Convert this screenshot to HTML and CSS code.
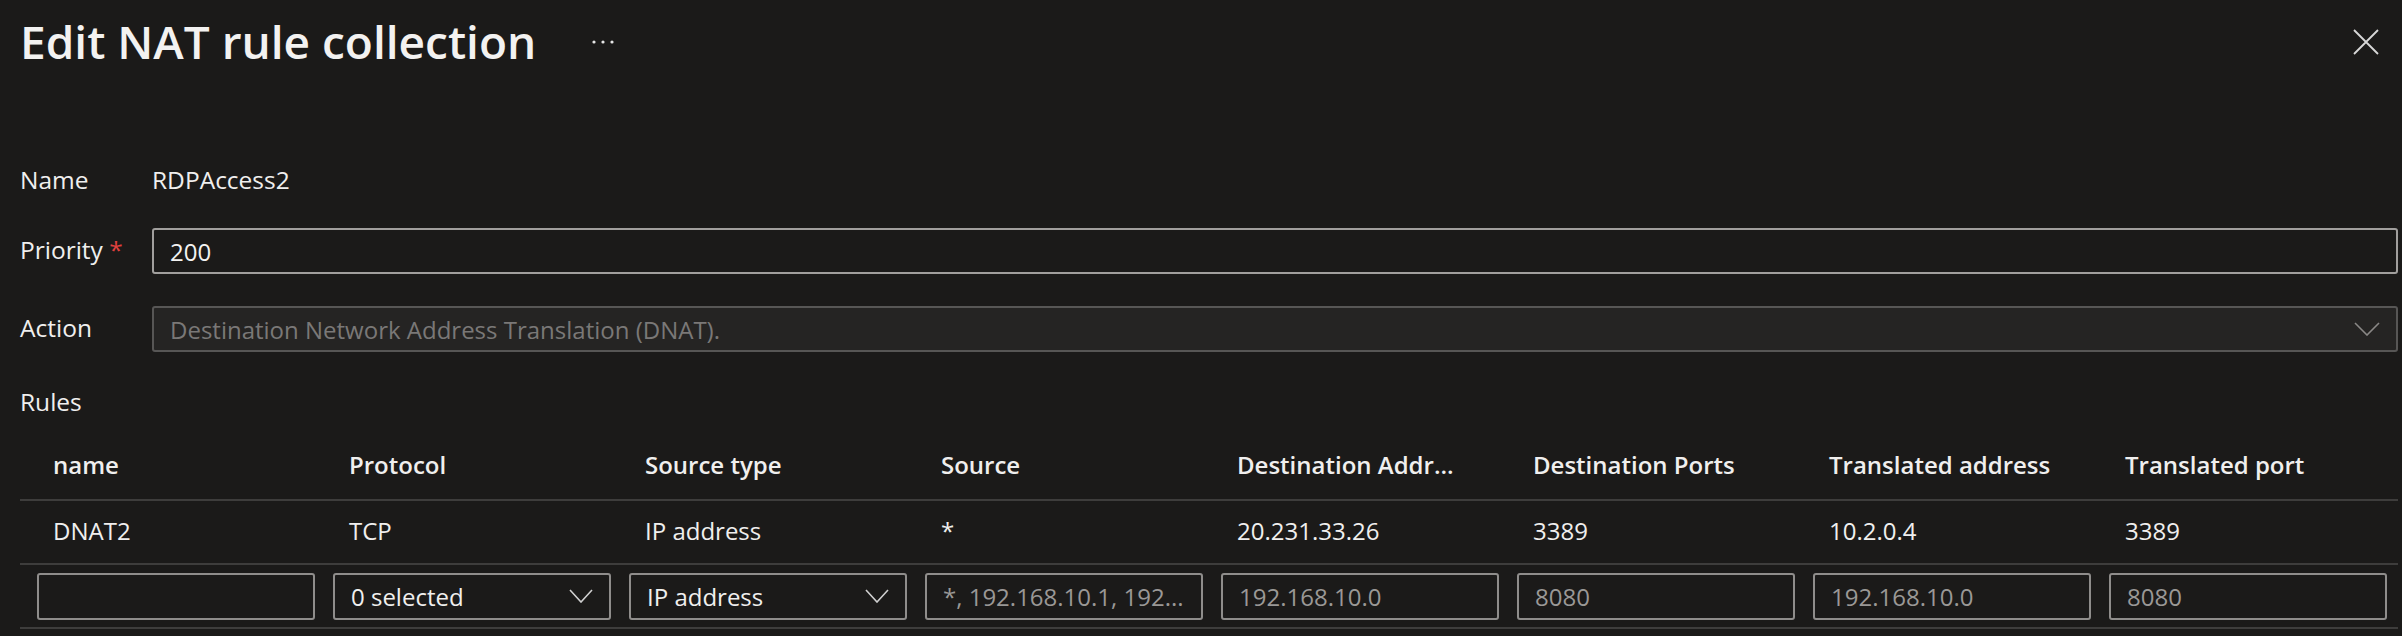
FILE: index.html
```html
<!DOCTYPE html>
<html lang="en">
<head>
<meta charset="utf-8">
<title>Edit NAT rule collection</title>
<link rel="stylesheet" href="styles.css">
</head>
<body>
<div class="panel">
  <header class="title-bar">
    <div class="title-group">
      <h1 class="title">Edit NAT rule collection</h1>
      <button class="more" aria-label="More">
        <svg width="22" height="6" viewBox="0 0 22 6"><circle cx="2" cy="3" r="1.6"/><circle cx="11" cy="3" r="1.6"/><circle cx="20" cy="3" r="1.6"/></svg>
      </button>
    </div>
    <button class="close" aria-label="Close">
      <svg width="26" height="26" viewBox="0 0 26 26"><path d="M1 1 L25 25 M25 1 L1 25"/></svg>
    </button>
  </header>

  <section class="form">
    <div class="form-row">
      <span class="label">Name</span>
      <span class="value">RDPAccess2</span>
    </div>
    <div class="form-row">
      <label class="label" for="prio">Priority <span class="req">*</span></label>
      <input id="prio" class="field" type="text" value="200">
    </div>
    <div class="form-row">
      <span class="label">Action</span>
      <div class="field select disabled">
        <span class="select-text">Destination Network Address Translation (DNAT).</span>
        <svg class="chev" width="26" height="14" viewBox="0 0 26 14"><path d="M1 1 L13 13 L25 1"/></svg>
      </div>
    </div>
  </section>

  <div class="section-label">Rules</div>

  <div class="grid">
    <div class="grid-row head">
      <div class="cell"><span class="ct">name</span></div>
      <div class="cell"><span class="ct">Protocol</span></div>
      <div class="cell"><span class="ct">Source type</span></div>
      <div class="cell"><span class="ct">Source</span></div>
      <div class="cell"><span class="ct">Destination Addr...</span></div>
      <div class="cell"><span class="ct">Destination Ports</span></div>
      <div class="cell"><span class="ct">Translated address</span></div>
      <div class="cell"><span class="ct">Translated port</span></div>
    </div>
    <div class="grid-row data">
      <div class="cell"><span class="ct">DNAT2</span></div>
      <div class="cell"><span class="ct">TCP</span></div>
      <div class="cell"><span class="ct">IP address</span></div>
      <div class="cell"><span class="ct">*</span></div>
      <div class="cell"><span class="ct">20.231.33.26</span></div>
      <div class="cell"><span class="ct">3389</span></div>
      <div class="cell"><span class="ct">10.2.0.4</span></div>
      <div class="cell"><span class="ct">3389</span></div>
    </div>
    <div class="grid-row edit">
      <div class="cell"><input class="cfield" type="text"></div>
      <div class="cell"><div class="cfield select"><span class="select-text">0 selected</span><svg class="chev" width="24" height="14" viewBox="0 0 24 14"><path d="M1 1 L12 13 L23 1"/></svg></div></div>
      <div class="cell"><div class="cfield select"><span class="select-text">IP address</span><svg class="chev" width="24" height="14" viewBox="0 0 24 14"><path d="M1 1 L12 13 L23 1"/></svg></div></div>
      <div class="cell"><input class="cfield" type="text" placeholder="*, 192.168.10.1, 192..."></div>
      <div class="cell"><input class="cfield" type="text" placeholder="192.168.10.0"></div>
      <div class="cell"><input class="cfield" type="text" placeholder="8080"></div>
      <div class="cell"><input class="cfield" type="text" placeholder="192.168.10.0"></div>
      <div class="cell"><input class="cfield" type="text" placeholder="8080"></div>
    </div>
  </div>
</div>
</body>
</html>
```

FILE: styles.css
```css
html, body {
  margin: 0;
  padding: 0;
  background: #1b1a19;
}

body {
  font-family: "Open Sans", "Noto Sans", "Liberation Sans", sans-serif;
  font-size: 24px;
  color: #f0efee;
}

.panel {
  padding: 0 4px 0 20px;
}

/* Title bar */
.title-bar {
  height: 84px;
  display: flex;
  align-items: center;
  justify-content: space-between;
}

.title-group {
  display: flex;
  align-items: center;
  gap: 56px;
}

.title {
  margin: 0;
  font-size: 46px;
  font-weight: 600;
  line-height: 56px;
  padding-bottom: 3px;
  color: #f3f2f1;
}

.more {
  background: none;
  border: 0;
  padding: 0;
  display: flex;
  fill: #e6e6e6;
}

.close {
  background: none;
  border: 0;
  padding: 0;
  margin-right: 19px;
  display: flex;
}

.close svg path {
  stroke: #d8d8d8;
  stroke-width: 1.8;
  fill: none;
}

/* Form */
.form {
  margin-top: 74px;
  display: flex;
  flex-direction: column;
}

.form-row {
  display: flex;
  align-items: center;
  height: 46px;
}

.form-row + .form-row {
  margin-top: 24px;
}

.form-row + .form-row + .form-row {
  margin-top: 32px;
}

.label {
  width: 132px;
  flex: none;
  font-size: 24.5px;
  padding-bottom: 3px;
  color: #f0efee;
}

.req {
  color: #e0413f;
}

.value {
  font-size: 24.5px;
  padding-bottom: 3px;
  color: #f0efee;
}

.field {
  flex: 1;
  box-sizing: border-box;
  height: 46px;
  border: 2px solid #a19f9d;
  border-radius: 3px;
  background: #1b1a19;
  color: #f3f2f1;
  font: inherit;
  font-size: 24px;
  padding: 0 16px;
  outline: none;
}

.select {
  display: flex;
  align-items: center;
  justify-content: space-between;
}

.field.disabled {
  background: #252423;
  border-color: #575655;
  color: #7a7877;
}

.chev path {
  fill: none;
  stroke: #d0d0d0;
  stroke-width: 1.6;
}

.field.disabled .chev path {
  stroke: #8a8886;
}

/* Rules */
.section-label {
  margin-top: 36px;
  line-height: 28px;
  font-size: 24.5px;
  margin-bottom: 21px;
}

.grid {
  display: flex;
  flex-direction: column;
}

.grid-row {
  display: grid;
  grid-template-columns: repeat(8, 296px);
  height: 64px;
  box-sizing: border-box;
  border-bottom: 2px solid #3e3d3c;
  align-items: center;
}

.grid-row.head {
  padding-bottom: 8px;
  font-weight: 600;
}

.grid-row.data {
  padding-bottom: 3px;
}

.cell {
  padding: 0 1px 0 17px;
  min-width: 0;
}

.ct {
  display: block;
  padding-left: 16px;
  white-space: nowrap;
  overflow: hidden;
}

.cfield {
  width: 100%;
  box-sizing: border-box;
  height: 47px;
  border: 2px solid #8f8d8b;
  border-radius: 3px;
  background: #1b1a19;
  color: #f0efee;
  font: inherit;
  padding: 0 16px;
  outline: none;
}

.cfield::placeholder {
  color: #9a9896;
  opacity: 1;
}
```
